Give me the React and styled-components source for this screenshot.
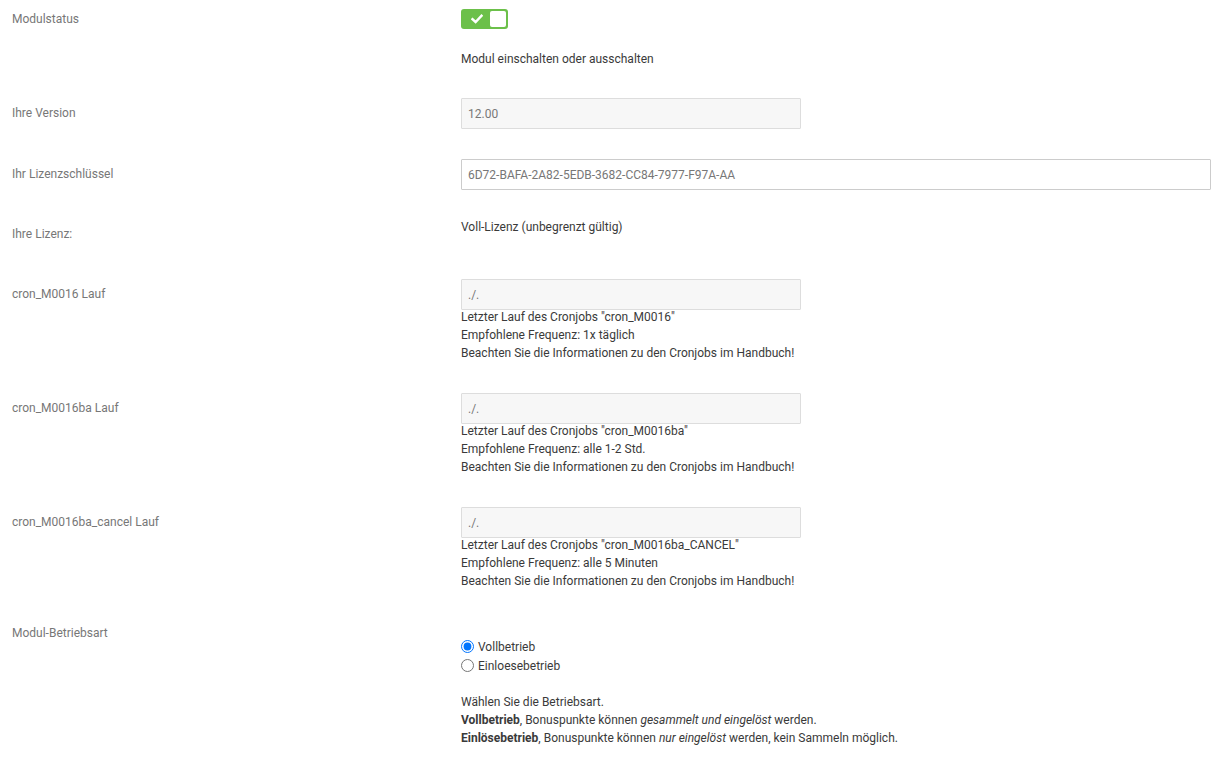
import React from 'react';
import styled, { createGlobalStyle } from 'styled-components';

const GlobalStyle = createGlobalStyle`
  html, body {
    margin: 0;
    padding: 0;
    background: #fff;
  }
  body {
    font-family: Roboto, "Liberation Sans", Arial, sans-serif;
    font-size: 12px;
    color: #333;
  }
`;

const Page = styled.div`
  padding: 4px 10px 0 12px;
`;

const Row = styled.div`
  display: grid;
  grid-template-columns: 449px 1fr;
  margin-bottom: ${props => props.gap ?? 30}px;
`;

const Label = styled.div`
  color: #777;
  line-height: 17px;
  padding: 7px 0;
`;

const Value = styled.div`
  display: flex;
  flex-direction: column;
  align-items: flex-start;
`;

const Text = styled.div`
  line-height: 17px;
  color: #3a3a3a;
  margin-top: ${props => props.top || 0}px;
`;

const Help = styled.div`
  line-height: 18px;
  color: #3a3a3a;
  margin-top: ${props => props.top || 0}px;
  b {
    font-weight: 700;
  }
`;

const Field = styled.input`
  box-sizing: border-box;
  width: ${props => (props.wide ? '100%' : '340px')};
  height: 31px;
  padding: 0 6px;
  border: 1px solid ${props => (props.readOnly ? '#ddd' : '#ccc')};
  border-radius: 1px;
  background: ${props => (props.readOnly ? '#f7f7f7' : '#fff')};
  font-family: Roboto, "Liberation Sans", Arial, sans-serif;
  font-size: 12px;
  color: #777;
  outline: none;
`;

const Toggle = styled.div`
  box-sizing: border-box;
  margin-top: 5px;
  width: 47px;
  height: 20px;
  border-radius: 3px;
  background: #6cc04a;
  display: flex;
  align-items: center;
  padding: 2px;
`;

const ToggleIcon = styled.div`
  flex: 1;
  display: flex;
  align-items: center;
  justify-content: center;
`;

const Knob = styled.div`
  width: 16px;
  height: 16px;
  border-radius: 2px;
  background: #fff;
`;

const RadioGroup = styled.div`
  margin-top: 19px;
`;

const RadioRow = styled.label`
  display: flex;
  align-items: center;
  height: 19px;
  color: #3a3a3a;
  input {
    width: 13px;
    height: 13px;
    margin: 0 4px 0 0;
    accent-color: #0075ff;
  }
`;

function Check() {
  return (
    <svg width="12" height="10" viewBox="0 0 12 10">
      <path d="M1.5 5.2 L4.6 8 L10.5 1.8" fill="none" stroke="#fff" strokeWidth="2.4" strokeLinecap="square" />
    </svg>
  );
}

const crons = [
  { label: 'cron_M0016 Lauf', job: 'cron_M0016', freq: '1x täglich' },
  { label: 'cron_M0016ba Lauf', job: 'cron_M0016ba', freq: 'alle 1-2 Std.' },
  { label: 'cron_M0016ba_cancel Lauf', job: 'cron_M0016ba_CANCEL', freq: 'alle 5 Minuten' },
];

export default function App() {
  return (
    <Page>
      <GlobalStyle />
      <Row gap={30}>
        <Label>Modulstatus</Label>
        <Value>
          <Toggle>
            <ToggleIcon><Check /></ToggleIcon>
            <Knob />
          </Toggle>
          <Text top={22}>Modul einschalten oder ausschalten</Text>
        </Value>
      </Row>
      <Row>
        <Label>Ihre Version</Label>
        <Value>
          <Field readOnly value="12.00" />
        </Value>
      </Row>
      <Row gap={29}>
        <Label>Ihr Lizenzschlüssel</Label>
        <Value>
          <Field wide defaultValue="6D72-BAFA-2A82-5EDB-3682-CC84-7977-F97A-AA" />
        </Value>
      </Row>
      <Row gap={29}>
        <Label>Ihre Lizenz:</Label>
        <Value>
          <Text>Voll-Lizenz (unbegrenzt gültig)</Text>
        </Value>
      </Row>
      {crons.map((c, i) => (
        <Row key={c.job} gap={i === crons.length - 1 ? 28 : 31}>
          <Label>{c.label}</Label>
          <Value>
            <Field readOnly value="./." />
            <Help top={-2}>
              Letzter Lauf des Cronjobs "{c.job}"<br />
              Empfohlene Frequenz: {c.freq}<br />
              Beachten Sie die Informationen zu den Cronjobs im Handbuch!
            </Help>
          </Value>
        </Row>
      ))}
      <Row gap={0}>
        <Label>Modul-Betriebsart</Label>
        <Value>
          <RadioGroup>
            <RadioRow>
              <input type="radio" name="mode" defaultChecked />
              Vollbetrieb
            </RadioRow>
            <RadioRow>
              <input type="radio" name="mode" />
              Einloesebetrieb
            </RadioRow>
          </RadioGroup>
          <Help top={18}>
            Wählen Sie die Betriebsart.<br />
            <b>Vollbetrieb</b>, Bonuspunkte können <i>gesammelt und eingelöst</i> werden.<br />
            <b>Einlösebetrieb</b>, Bonuspunkte können <i>nur eingelöst</i> werden, kein Sammeln möglich.
          </Help>
        </Value>
      </Row>
    </Page>
  );
}
